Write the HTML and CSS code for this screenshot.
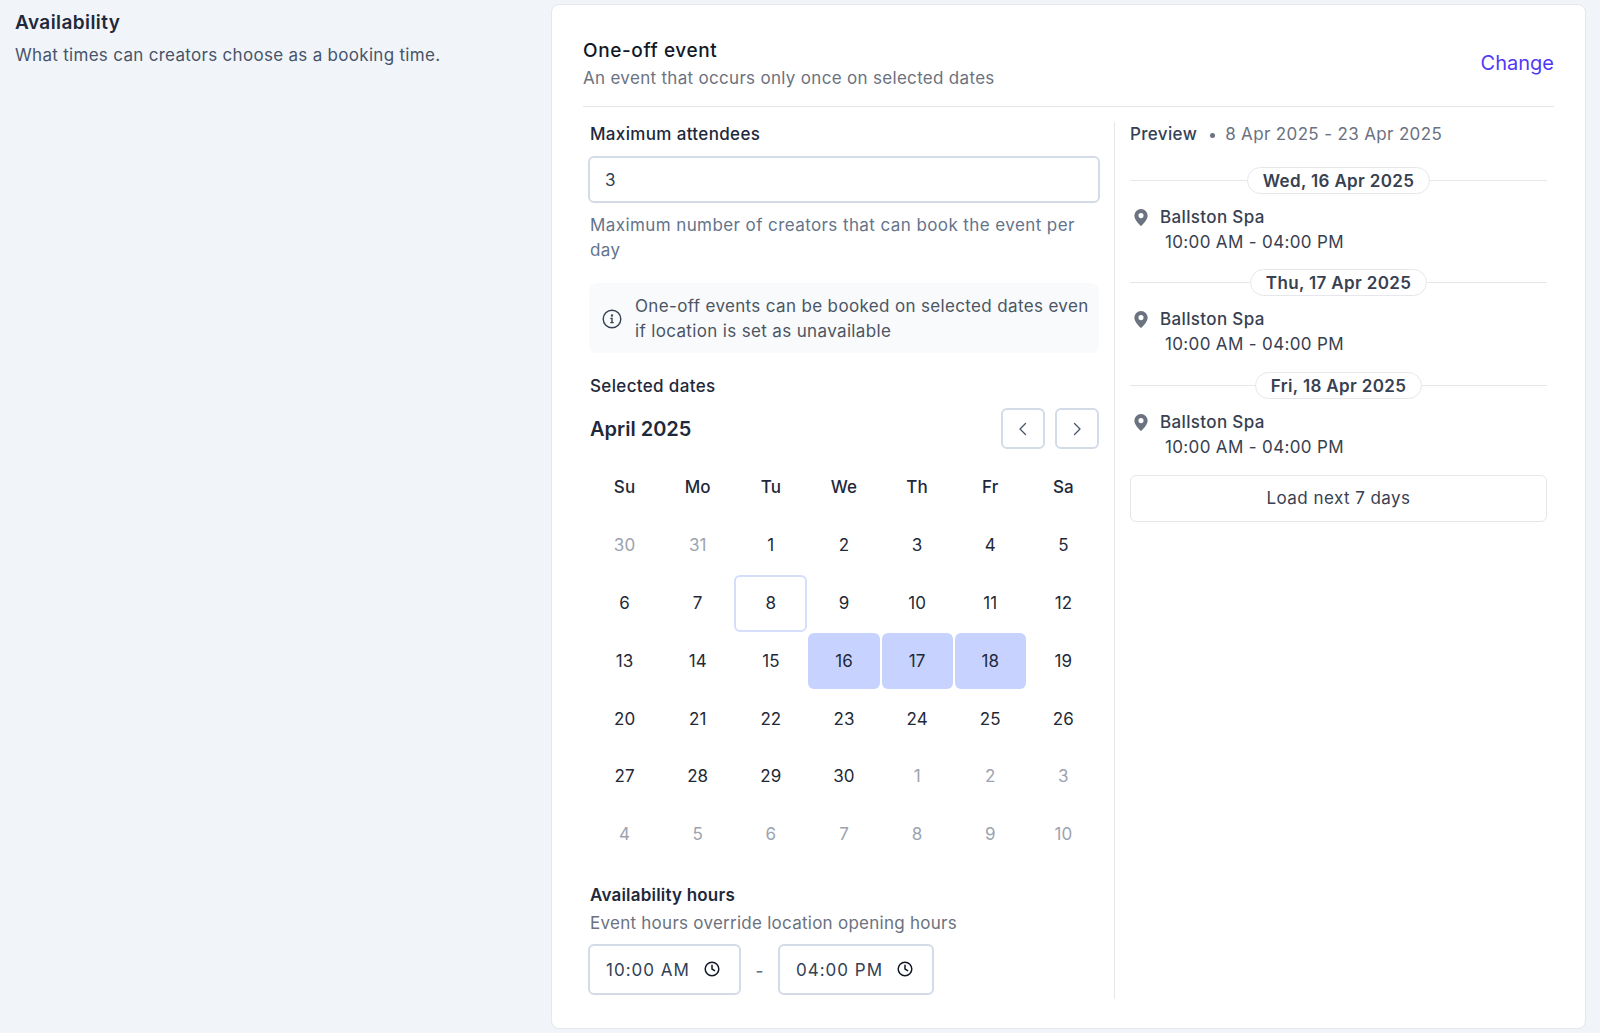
FILE: index.html
```html
<!DOCTYPE html>
<html>
<head>
    <meta charset="UTF-8">
    <title>Availability</title>
    <link rel="stylesheet" href="styles.css">
</head>
<body>
    <div class="page">
        <div class="intro">
            <div class="intro-title">Availability</div>
            <div class="intro-text">What times can creators choose as a booking time.</div>
        </div>

        <div class="card">
            <div class="card-header">
                <div>
                    <div class="card-title">One-off event</div>
                    <div class="card-text">An event that occurs only once on selected dates</div>
                </div>
                <a class="change-link">Change</a>
            </div>

            <div class="card-body">
                <div class="form-col">
                    <div class="label">Maximum attendees</div>
                    <input class="text-input" type="text" value="3">
                    <div class="help">Maximum number of creators that can book the event per day</div>

                    <div class="info-box">
                        <svg class="info-icon" viewBox="0 0 20 20" fill="none" stroke="currentColor" stroke-width="1.4" stroke-linecap="round">
                            <circle cx="10" cy="10" r="8.8"/>
                            <path d="M8.9 9.4H10v4.2M8.8 13.6h2.4"/>
                            <circle cx="10" cy="6.5" r="0.5"/>
                        </svg>
                        <div>One-off events can be booked on selected dates even if location is set as unavailable</div>
                    </div>

                    <div class="label label-dates">Selected dates</div>
                    <div class="month-row">
                        <div class="month-name">April 2025</div>
                        <div class="month-nav">
                            <button class="nav-btn">
                                <svg viewBox="0 0 16 16" fill="none" stroke="currentColor" stroke-width="1.3" stroke-linecap="round" stroke-linejoin="round"><path d="M10.5 2.5 5 8l5.5 5.5"/></svg>
                            </button>
                            <button class="nav-btn">
                                <svg viewBox="0 0 16 16" fill="none" stroke="currentColor" stroke-width="1.3" stroke-linecap="round" stroke-linejoin="round"><path d="M5.5 2.5 11 8l-5.5 5.5"/></svg>
                            </button>
                        </div>
                    </div>

                    <div class="calendar">
                        <div class="weekday">Su</div>
                        <div class="weekday">Mo</div>
                        <div class="weekday">Tu</div>
                        <div class="weekday">We</div>
                        <div class="weekday">Th</div>
                        <div class="weekday">Fr</div>
                        <div class="weekday">Sa</div>

                        <div class="day muted">30</div>
                        <div class="day muted">31</div>
                        <div class="day">1</div>
                        <div class="day">2</div>
                        <div class="day">3</div>
                        <div class="day">4</div>
                        <div class="day">5</div>

                        <div class="day">6</div>
                        <div class="day">7</div>
                        <div class="day today">8</div>
                        <div class="day">9</div>
                        <div class="day">10</div>
                        <div class="day">11</div>
                        <div class="day">12</div>

                        <div class="day">13</div>
                        <div class="day">14</div>
                        <div class="day">15</div>
                        <div class="day selected">16</div>
                        <div class="day selected">17</div>
                        <div class="day selected">18</div>
                        <div class="day">19</div>

                        <div class="day">20</div>
                        <div class="day">21</div>
                        <div class="day">22</div>
                        <div class="day">23</div>
                        <div class="day">24</div>
                        <div class="day">25</div>
                        <div class="day">26</div>

                        <div class="day">27</div>
                        <div class="day">28</div>
                        <div class="day">29</div>
                        <div class="day">30</div>
                        <div class="day muted">1</div>
                        <div class="day muted">2</div>
                        <div class="day muted">3</div>

                        <div class="day muted">4</div>
                        <div class="day muted">5</div>
                        <div class="day muted">6</div>
                        <div class="day muted">7</div>
                        <div class="day muted">8</div>
                        <div class="day muted">9</div>
                        <div class="day muted">10</div>
                    </div>

                    <div class="label label-hours">Availability hours</div>
                    <div class="hours-text">Event hours override location opening hours</div>
                    <div class="hours-row">
                        <div class="time-input time-start">
                            <span>10:00 AM</span>
                            <svg class="clock" viewBox="0 0 16 16" fill="none" stroke="currentColor" stroke-width="1.5" stroke-linecap="round" stroke-linejoin="round"><circle cx="8" cy="8" r="6.8"/><path d="M8 4.3V8l2.6 1.6"/></svg>
                        </div>
                        <span class="hours-dash">-</span>
                        <div class="time-input time-end">
                            <span>04:00 PM</span>
                            <svg class="clock" viewBox="0 0 16 16" fill="none" stroke="currentColor" stroke-width="1.5" stroke-linecap="round" stroke-linejoin="round"><circle cx="8" cy="8" r="6.8"/><path d="M8 4.3V8l2.6 1.6"/></svg>
                        </div>
                    </div>
                </div>

                <div class="preview-col">
                    <div class="preview-head">
                        <span class="preview-title">Preview</span>
                        <span class="preview-dot"></span>
                        <span class="preview-range">8 Apr 2025 - 23 Apr 2025</span>
                    </div>

                    <div class="preview-day">
                        <div class="day-sep"><span class="day-pill">Wed, 16 Apr 2025</span></div>
                        <div class="slot-place">
                            <svg class="pin" viewBox="0 0 16 20"><path fill-rule="evenodd" d="M8 1a7 7 0 0 0-7 7c0 4.6 5.1 9.4 6.3 10.5a1 1 0 0 0 1.4 0C9.9 17.4 15 12.6 15 8a7 7 0 0 0-7-7zm0 9.7a2.7 2.7 0 1 1 0-5.4 2.7 2.7 0 0 1 0 5.4z"/></svg>
                            Ballston Spa
                        </div>
                        <div class="slot-time">10:00 AM - 04:00 PM</div>
                    </div>

                    <div class="preview-day">
                        <div class="day-sep"><span class="day-pill">Thu, 17 Apr 2025</span></div>
                        <div class="slot-place">
                            <svg class="pin" viewBox="0 0 16 20"><path fill-rule="evenodd" d="M8 1a7 7 0 0 0-7 7c0 4.6 5.1 9.4 6.3 10.5a1 1 0 0 0 1.4 0C9.9 17.4 15 12.6 15 8a7 7 0 0 0-7-7zm0 9.7a2.7 2.7 0 1 1 0-5.4 2.7 2.7 0 0 1 0 5.4z"/></svg>
                            Ballston Spa
                        </div>
                        <div class="slot-time">10:00 AM - 04:00 PM</div>
                    </div>

                    <div class="preview-day">
                        <div class="day-sep"><span class="day-pill">Fri, 18 Apr 2025</span></div>
                        <div class="slot-place">
                            <svg class="pin" viewBox="0 0 16 20"><path fill-rule="evenodd" d="M8 1a7 7 0 0 0-7 7c0 4.6 5.1 9.4 6.3 10.5a1 1 0 0 0 1.4 0C9.9 17.4 15 12.6 15 8a7 7 0 0 0-7-7zm0 9.7a2.7 2.7 0 1 1 0-5.4 2.7 2.7 0 0 1 0 5.4z"/></svg>
                            Ballston Spa
                        </div>
                        <div class="slot-time">10:00 AM - 04:00 PM</div>
                    </div>

                    <button class="load-btn">Load next 7 days</button>
                </div>
            </div>
        </div>
    </div>
</body>
</html>
```

FILE: styles.css
```css
:root {
    --page-bg: #f1f4f9;
    --border-color: #e5e7eb;
    --input-border: #d3dbe7;
    --text-dark: #0f172a;
    --text-label: #1e293b;
    --text-body: #374151;
    --text-muted: #6b7280;
    --text-slate: #64748b;
}

html, body {
    height: 100%;
}

body {
    margin: 0;
    background: var(--page-bg);
    font-family: 'Inter', sans-serif;
    font-size: 17px;
    letter-spacing: 0.35px;
    line-height: 25px;
    color: var(--text-dark);
    overflow: hidden;
}

.page {
    display: flex;
    align-items: flex-start;
    padding: 4px 14px 4px 15px;
}

/* left text */
.intro {
    width: 536px;
    flex-shrink: 0;
}

.intro-title {
    font-size: 19px;
    font-weight: 600;
    line-height: 26px;
    letter-spacing: 0.42px;
    margin-top: 6px;
    color: var(--text-label);
}

.intro-text {
    margin-top: 7px;
    letter-spacing: 0.3px;
    color: #475569;
}

/* card */
.card {
    flex: 1;
    height: 1025px;
    box-sizing: border-box;
    background: #fff;
    border: 1px solid var(--border-color);
    border-radius: 8px;
    padding: 32px 31px 0 31px;
}

.card-header {
    display: flex;
    justify-content: space-between;
    align-items: center;
    padding-bottom: 15px;
    border-bottom: 1px solid var(--border-color);
}

.card-title {
    font-size: 19px;
    font-weight: 500;
    line-height: 26px;
    letter-spacing: 0.6px;
    margin-top: 1px;
    color: #111827;
}

.card-text {
    margin-top: 1px;
    line-height: 26px;
    letter-spacing: 0.31px;
    color: var(--text-muted);
}

.change-link {
    font-size: 20px;
    letter-spacing: 0;
    padding-bottom: 2px;
    color: #4f39f6;
}

.card-body {
    display: flex;
    margin-top: 15px;
}

.form-col {
    width: 531px;
    box-sizing: border-box;
    padding: 0 14px 4px 5px;
    flex-shrink: 0;
}

.label {
    font-weight: 500;
    line-height: 24px;
    padding-left: 2px;
    color: var(--text-label);
}

.text-input {
    display: block;
    width: 100%;
    height: 47px;
    box-sizing: border-box;
    margin-top: 10px;
    padding: 0 15px;
    border: 2px solid var(--input-border);
    border-radius: 6px;
    font: inherit;
    color: #334155;
    outline: none;
}

.help {
    margin-top: 10px;
    padding-left: 2px;
    letter-spacing: 0.41px;
    color: var(--text-slate);
}

.info-box {
    display: flex;
    align-items: center;
    gap: 13px;
    margin: 20px 1px 0;
    padding: 11px 4px 9px 13px;
    background: #f8fafc;
    border-radius: 8px;
    color: #4b5563;
}

.info-icon {
    width: 20px;
    height: 20px;
    flex-shrink: 0;
    color: #374151;
}

.label-dates {
    margin-top: 21px;
}

.month-row {
    display: flex;
    justify-content: space-between;
    align-items: center;
    margin-top: 10px;
    padding: 0 1px 0 2px;
}

.month-name {
    font-size: 20px;
    font-weight: 600;
    letter-spacing: 0;
    padding-top: 2px;
    color: var(--text-label);
}

.month-nav {
    display: flex;
    gap: 10px;
}

.nav-btn {
    display: flex;
    align-items: center;
    justify-content: center;
    width: 44px;
    height: 41px;
    padding: 0;
    background: #fff;
    border: 2px solid var(--input-border);
    border-radius: 6px;
    color: #475569;
}

.nav-btn svg {
    width: 16px;
    height: 16px;
}

/* calendar */
.calendar {
    display: grid;
    grid-template-columns: repeat(7, 1fr);
    grid-auto-rows: 57.8px;
    margin-top: 10px;
    letter-spacing: 0.1px;
}

.weekday, .day {
    display: flex;
    align-items: center;
    justify-content: center;
}

.weekday {
    font-weight: 500;
    color: var(--text-label);
}

.day {
    box-sizing: border-box;
    color: #1f2937;
    border-radius: 6px;
}

.day.muted {
    color: #9ca3af;
}

.day.today {
    border: 2px solid #d6defd;
}

.day.selected {
    background: #c7d2fe;
    margin: 1px;
    color: var(--text-label);
}

.label-hours {
    margin-top: 19px;
    font-weight: 600;
    letter-spacing: 0.2px;
}

.hours-text {
    margin-top: 4px;
    padding-left: 2px;
    letter-spacing: 0.26px;
    color: var(--text-muted);
}

.hours-row {
    display: flex;
    align-items: center;
    margin-top: 8px;
}

.time-input {
    display: flex;
    align-items: center;
    justify-content: space-between;
    height: 51px;
    box-sizing: border-box;
    padding: 2px 19px 0 16px;
    border: 2px solid var(--input-border);
    border-radius: 6px;
    letter-spacing: 1px;
    color: #334155;
}

.time-start {
    width: 153px;
}

.time-end {
    width: 156px;
}

.clock {
    width: 16px;
    height: 16px;
    margin-top: -2px;
    color: #111827;
}

.hours-dash {
    width: 37px;
    text-align: center;
    padding-top: 4px;
    font-weight: 500;
    color: var(--text-slate);
}

/* preview */
.preview-col {
    flex: 1;
    border-left: 1px solid var(--border-color);
    padding: 0 7px 0 15px;
}

.preview-head {
    display: flex;
    align-items: center;
    line-height: 24px;
}

.preview-title {
    font-weight: 500;
    color: #334155;
}

.preview-dot {
    width: 5px;
    height: 5px;
    margin: 2px 10px 0 13px;
    border-radius: 50%;
    background: var(--text-muted);
}

.preview-range {
    color: var(--text-muted);
}

.preview-day {
    margin-top: 20.5px;
}

.preview-day + .preview-day {
    margin-top: 14.5px;
}

.day-sep {
    display: flex;
    align-items: center;
}

.day-sep::before, .day-sep::after {
    content: '';
    flex: 1;
    height: 1px;
    background: var(--border-color);
}

.day-pill {
    height: 27px;
    box-sizing: border-box;
    padding: 0 15px;
    border: 1px solid var(--border-color);
    border-radius: 14px;
    font-weight: 600;
    line-height: 26px;
    color: var(--text-body);
}

.slot-place {
    display: flex;
    align-items: center;
    gap: 11px;
    margin-top: 11px;
    padding-left: 3px;
    font-weight: 500;
    color: var(--text-body);
}

.pin {
    width: 16px;
    height: 19px;
    fill: var(--text-muted);
}

.slot-time {
    padding-left: 35px;
    color: var(--text-body);
}

.load-btn {
    display: block;
    width: 100%;
    height: 47px;
    margin-top: 15px;
    background: #fff;
    border: 1px solid var(--border-color);
    border-radius: 6px;
    font: inherit;
    letter-spacing: 0.45px;
    color: var(--text-body);
}
```
